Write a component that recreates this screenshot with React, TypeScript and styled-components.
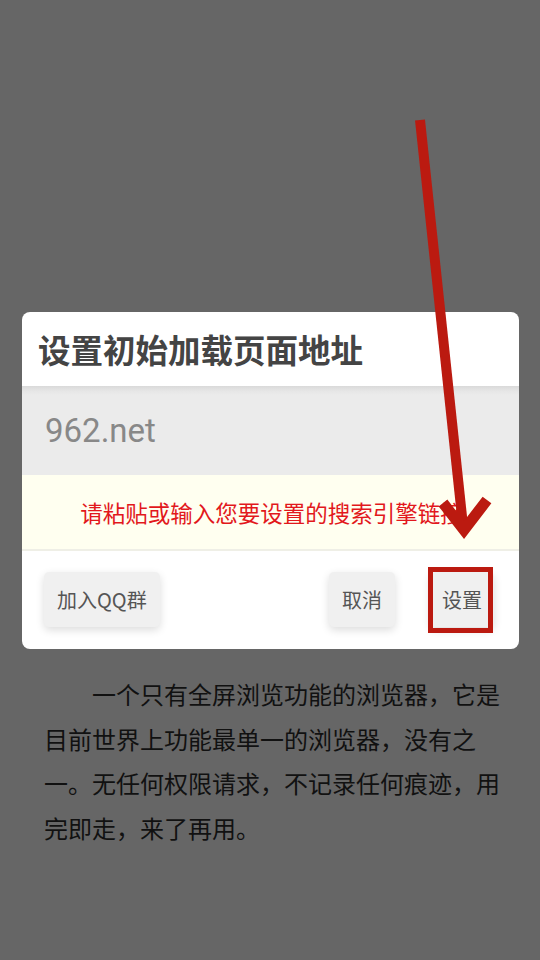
import * as React from 'react';
import styled, { createGlobalStyle } from 'styled-components';

const GlobalStyle = createGlobalStyle`
  html, body {
    margin: 0;
    padding: 0;
    background: #666666;
  }
  body {
    font-family: 'Noto Sans CJK SC', 'Noto Sans', sans-serif;
  }
`;

const Page = styled.div`
  position: relative;
  width: 540px;
  height: 960px;
  overflow: hidden;
  background: #666666;
  padding-top: 312px;
  box-sizing: border-box;
`;

const Dialog = styled.div`
  margin: 0 21px 0 22px;
  background: #ffffff;
  border-radius: 8px;
  overflow: hidden;
`;

const Title = styled.div`
  height: 74px;
  line-height: 74px;
  padding-left: 16px;
  font-size: 32.5px;
  font-weight: 700;
  color: #444444;
`;

const UrlField = styled.div`
  height: 89px;
  display: flex;
  align-items: center;
  padding-left: 23px;
  font-family: Roboto, 'Noto Sans', sans-serif;
  font-size: 33px;
  color: #888888;
  background: linear-gradient(#d9d9d9 0px, #e6e6e6 5px, #ebebeb 9px, #ebebeb 100%);
`;

const Hint = styled.div`
  height: 74px;
  display: flex;
  align-items: center;
  justify-content: center;
  padding-left: 2px;
  font-size: 22.5px;
  color: #e2181c;
  background: #fffff0;
  border-bottom: 2px solid #efefe6;
`;

const ButtonRow = styled.div`
  display: flex;
  align-items: flex-start;
  height: 98px;
  padding: 21px 25px 0 22px;
  box-sizing: border-box;
`;

const Button = styled.div<{ $push?: boolean; $gap?: number }>`
  height: 55px;
  display: flex;
  align-items: center;
  justify-content: center;
  padding: 0 ${p => (p.$gap ? 12 : 13)}px;
  margin-left: ${p => (p.$push ? 'auto' : p.$gap ? `${p.$gap}px` : '0')};
  font-size: 20px;
  color: #555555;
  background: #f0f0f0;
  border-radius: 5px;
  box-shadow: 0 3px 8px rgba(0, 0, 0, 0.14);
`;

const Intro = styled.p`
  margin: 23px 0 0 44px;
  width: 458px;
  font-size: 24px;
  line-height: 44.5px;
  color: #111111;
  text-indent: 2em;
`;

const Highlight = styled.div`
  position: absolute;
  left: 428px;
  top: 567px;
  width: 55px;
  height: 56px;
  border: 5px solid #bb1a10;
`;

const Arrow = styled.svg`
  position: absolute;
  left: 0;
  top: 0;
  pointer-events: none;
`;

export default function App() {
  return (
    <>
      <GlobalStyle />
      <Page>
        <Dialog>
          <Title>设置初始加载页面地址</Title>
          <UrlField>962.net</UrlField>
          <Hint>请粘贴或输入您要设置的搜索引擎链接</Hint>
          <ButtonRow>
            <Button>加入QQ群</Button>
            <Button $push>取消</Button>
            <Button $gap={35}>设置</Button>
          </ButtonRow>
        </Dialog>
        <Intro>
          一个只有全屏浏览功能的浏览器，它是目前世界上功能最单一的浏览器，没有之一。无任何权限请求，不记录任何痕迹，用完即走，来了再用。
        </Intro>
        <Highlight />
        <Arrow width="540" height="960" viewBox="0 0 540 960">
          <line x1="420" y1="120" x2="463" y2="526" stroke="#bb1a10" strokeWidth="10" />
          <polyline
            points="443,503 464,530 487,500"
            fill="none"
            stroke="#bb1a10"
            strokeWidth="11"
            strokeLinejoin="miter"
          />
        </Arrow>
      </Page>
    </>
  );
}
